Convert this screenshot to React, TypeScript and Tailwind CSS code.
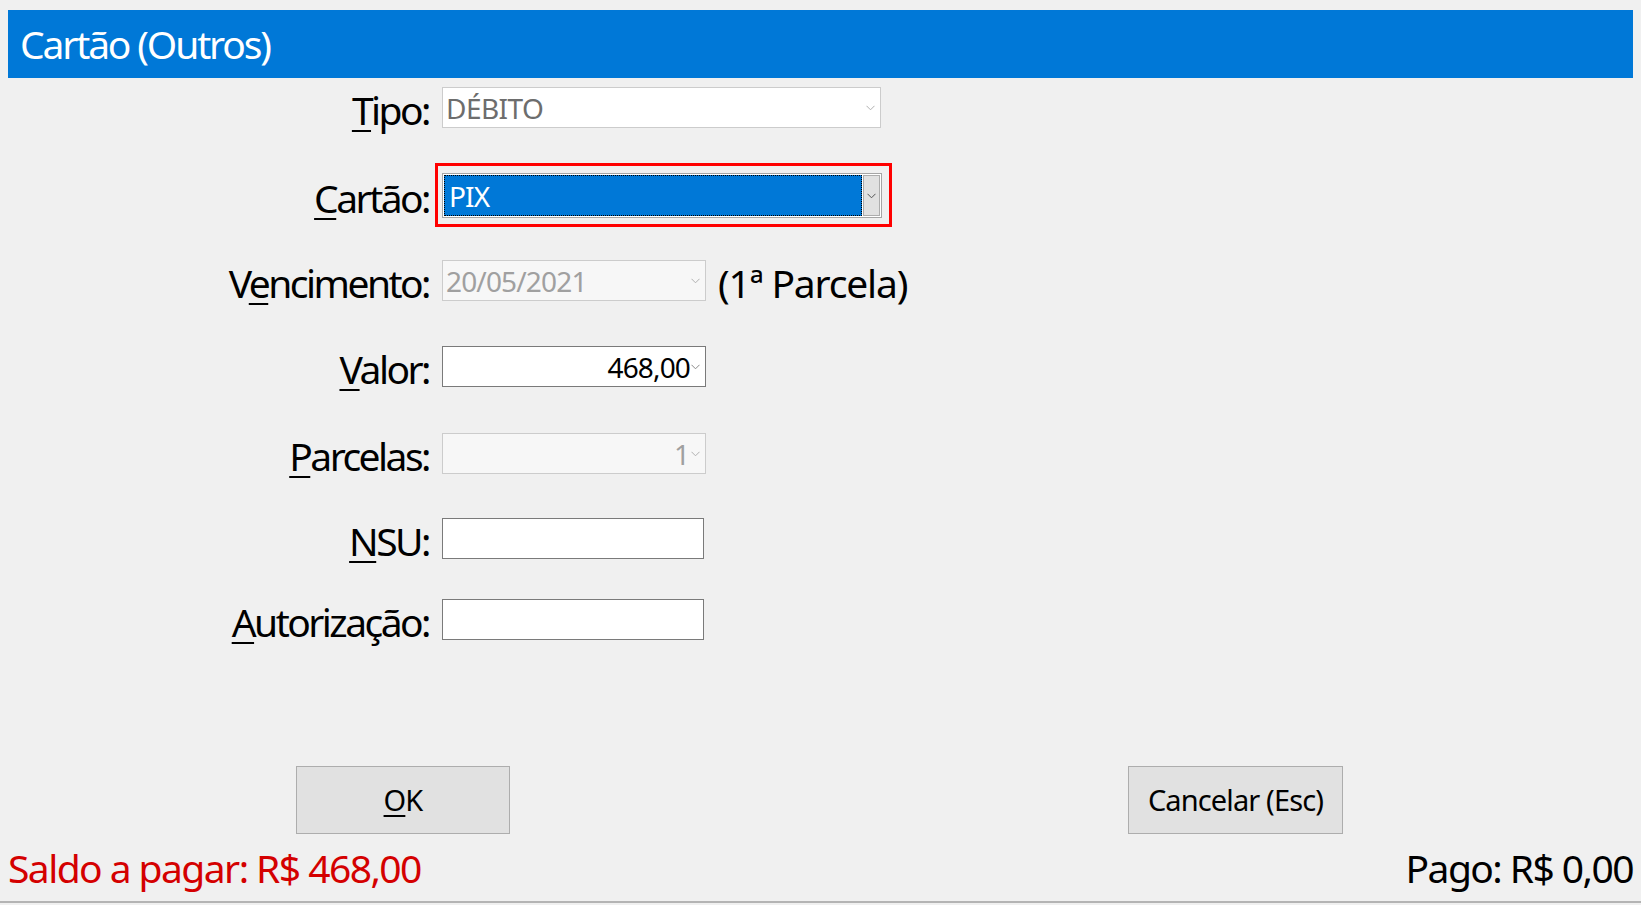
import React from 'react';

const font = { fontFamily: '"Noto Sans", "Open Sans", sans-serif' };

function Chevron({ color = '#8a8a8a' }: { color?: string }) {
  return (
    <svg width="9" height="6" viewBox="0 0 9 6" className="shrink-0">
      <polyline points="0.5,0.8 4.5,4.8 8.5,0.8" fill="none" stroke={color} strokeWidth="1" />
    </svg>
  );
}

function Label({ children }: { children: React.ReactNode }) {
  return (
    <div className="w-[429px] shrink-0 pt-[4px] text-right text-[39px] leading-[53px] tracking-[-0.065em] text-black">
      {children}
    </div>
  );
}

function U({ children }: { children: React.ReactNode }) {
  return <span className="underline decoration-[1.5px] underline-offset-[5px]">{children}</span>;
}

export default function App() {
  return (
    <div className="h-[905px] w-full overflow-hidden bg-[#f0f0f0] flex flex-col" style={font}>
      {/* Title */}
      <div className="mx-2 mt-[10px] h-[68px] shrink-0 bg-[#0078d7] flex items-center pl-[12px]">
        <span className="text-white text-[39px] tracking-[-0.055em] leading-none pb-[2px]">Cartão (Outros)</span>
      </div>

      {/* Form */}
      <div className="flex flex-col">
        {/* Tipo */}
        <div className="mt-[9px] flex items-center h-[41px] gap-[13px]">
          <Label><U>T</U>ipo:</Label>
          <div className="w-[439px] h-[41px] bg-white border border-[#cccccc] flex items-center pl-[3px] pr-[5px]">
            <span className="flex-1 text-[28px] text-[#6d6d6d] tracking-[-0.02em] leading-none">DÉBITO</span>
            <Chevron color="#b0b0b0" />
          </div>
        </div>

        {/* Cartão */}
        <div className="mt-[45px] flex items-center h-[45px] gap-[13px]">
          <Label><U>C</U>artão:</Label>
          <div className="relative w-[440px] h-[45px] bg-white border border-[#a5a5a5] p-[1px] flex gap-[1px]">
            <div className="flex-1 bg-[#0078d7] border border-dotted border-black flex items-center pl-[4px]">
              <span className="text-white text-[28px] tracking-[-0.03em] leading-none">PIX</span>
            </div>
            <div className="w-[17px] bg-[#e1e1e1] border border-[#adadad] flex items-center justify-center">
              <Chevron color="#555555" />
            </div>
            <div className="absolute -left-[8px] -top-[11px] -right-[11px] -bottom-[10px] border-[3px] border-[#ff0000] pointer-events-none" />
          </div>
        </div>

        {/* Vencimento */}
        <div className="mt-[42px] flex items-center h-[41px] gap-[13px]">
          <Label>V<U>e</U>ncimento:</Label>
          <div className="w-[264px] h-[41px] bg-[#f7f7f7] border border-[#cccccc] flex items-center pl-[3px] pr-[5px]">
            <span className="flex-1 text-[28px] text-[#a0a0a0] tracking-[-0.03em] leading-none">20/05/2021</span>
            <Chevron color="#b0b0b0" />
          </div>
          <span className="ml-[-1px] pt-[4px] text-[39px] leading-[53px] tracking-[-0.03em] text-black">(1ª Parcela)</span>
        </div>

        {/* Valor */}
        <div className="mt-[45px] flex items-center h-[41px] gap-[13px]">
          <Label><U>V</U>alor:</Label>
          <div className="w-[264px] h-[41px] bg-white border border-[#7a7a7a] flex items-center pr-[5px]">
            <span className="flex-1 text-right text-[28px] text-black tracking-[-0.03em] leading-none pr-[1px]">468,00</span>
            <Chevron />
          </div>
        </div>

        {/* Parcelas */}
        <div className="mt-[46px] flex items-center h-[41px] gap-[13px]">
          <Label><U>P</U>arcelas:</Label>
          <div className="w-[264px] h-[41px] bg-[#f7f7f7] border border-[#cccccc] flex items-center pr-[5px]">
            <span className="flex-1 text-right text-[28px] text-[#a0a0a0] leading-none pr-[1px]">1</span>
            <Chevron color="#b0b0b0" />
          </div>
        </div>

        {/* NSU */}
        <div className="mt-[44px] flex items-center h-[41px] gap-[13px]">
          <Label><U>N</U>SU:</Label>
          <div className="w-[262px] h-[41px] bg-white border border-[#7a7a7a]" />
        </div>

        {/* Autorização */}
        <div className="mt-[40px] flex items-center h-[41px] gap-[13px]">
          <Label><U>A</U>utorização:</Label>
          <div className="w-[262px] h-[41px] bg-white border border-[#7a7a7a]" />
        </div>
      </div>

      {/* Buttons */}
      <div className="mt-[126px] flex h-[68px] shrink-0">
        <button className="ml-[296px] w-[214px] h-[68px] bg-[#e1e1e1] border border-[#adadad] text-[29px] tracking-[-0.03em] text-black">
          <span className="underline decoration-[1.5px] underline-offset-[4px]">O</span>K
        </button>
        <button className="ml-[618px] w-[215px] h-[68px] bg-[#e1e1e1] border border-[#adadad] text-[29px] tracking-[-0.03em] text-black">
          Cancelar (Esc)
        </button>
      </div>

      {/* Footer */}
      <div className="mt-[7px] h-[62px] shrink-0 flex justify-between items-start px-2 border-b-2 border-[#b4b4b4]">
        <span className="text-[39px] leading-[53px] tracking-[-0.04em] text-[#d40000]">Saldo a pagar: R$ 468,00</span>
        <span className="text-[39px] leading-[53px] tracking-[-0.04em] text-black">Pago: R$ 0,00</span>
      </div>
    </div>
  );
}
